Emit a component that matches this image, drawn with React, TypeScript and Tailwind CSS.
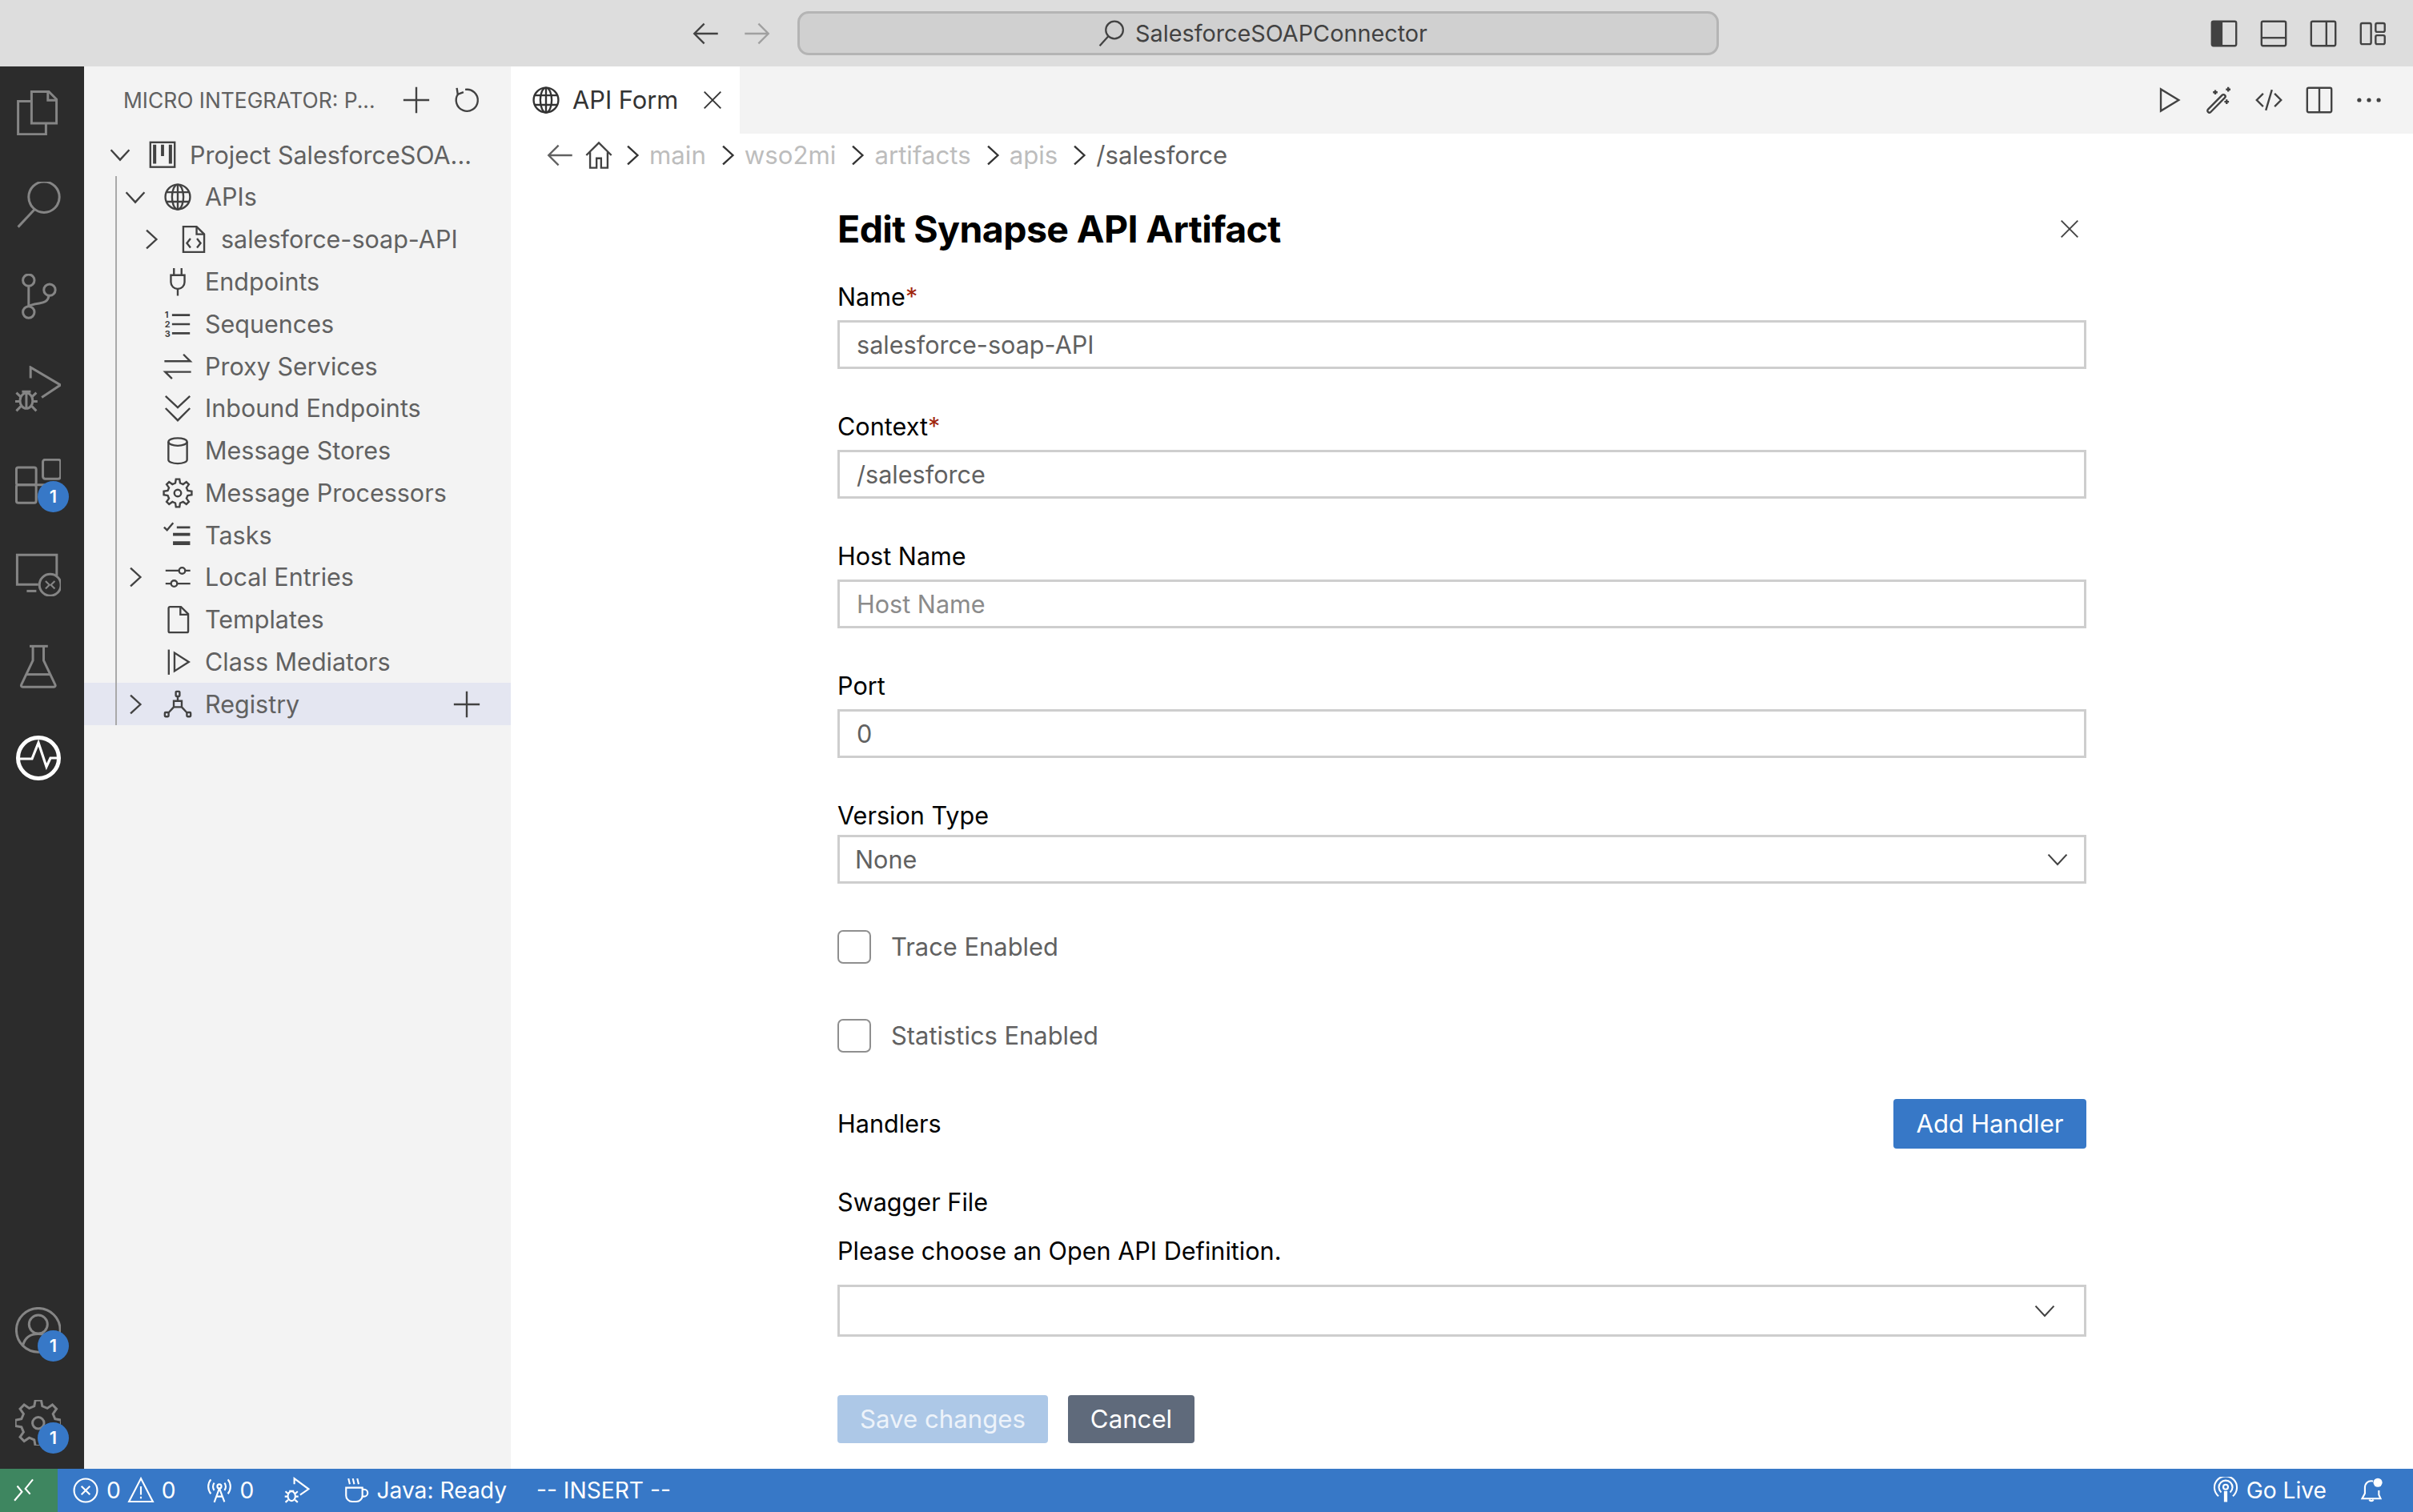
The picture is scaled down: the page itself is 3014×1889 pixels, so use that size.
import React from "react"

const font = "[font-family:Inter,'Liberation_Sans',sans-serif]"

// gear outline, codicon style
function gearPath(cx: number, cy: number, outer: number, inner: number, teeth: number) {
  const pts: string[] = []
  for (let i = 0; i < teeth; i++) {
    const a = (i / teeth) * Math.PI * 2
    const step = (Math.PI * 2) / teeth
    const at = (r: number, t: number) =>
      `${(cx + r * Math.sin(t)).toFixed(2)} ${(cy - r * Math.cos(t)).toFixed(2)}`
    pts.push(at(outer, a - step * 0.16), at(outer, a + step * 0.16), at(inner, a + step * 0.3), at(inner, a + step * 0.7))
  }
  return "M" + pts.join("L") + "Z"
}

function Ico({ children, className = "w-[38px] h-[38px]", sw = 1 }: { children: React.ReactNode; className?: string; sw?: number }) {
  return (
    <svg viewBox="0 0 16 16" fill="none" stroke="currentColor" strokeWidth={sw} className={`shrink-0 ${className}`}>
      {children}
    </svg>
  )
}

function BarIcon({ children, badge }: { children: React.ReactNode; badge?: boolean }) {
  return (
    <div className="relative w-[95px] h-[115.2px] flex items-center justify-center text-[#858585]">
      <svg viewBox="0 0 24 24" fill="none" stroke="currentColor" strokeWidth={1.25} className="w-[57.6px] h-[57.6px]">
        {children}
      </svg>
      {badge && (
        <span className="absolute left-[47px] top-[57px] w-[39px] h-[39px] rounded-full bg-[#3778c7] text-white text-[22px] font-semibold flex items-center justify-center">
          1
        </span>
      )}
    </div>
  )
}

function ActivityBar() {
  return (
    <div className="w-[105px] bg-[#2c2c2c] flex flex-col shrink-0">
      <BarIcon>
        <path d="M8.5 1h9l4 4v12.5h-13z" />
        <path d="M17 1v4.5h4.5" />
        <path d="M8.5 6H1.5v17.2h14.5v-5.7" />
      </BarIcon>
      <BarIcon>
        <circle cx="15" cy="8" r="8" />
        <path d="M10 14.5L1.5 23.6" />
      </BarIcon>
      <BarIcon>
        <circle cx="7" cy="3.4" r="3" />
        <circle cx="7" cy="20" r="3" />
        <circle cx="17.9" cy="8.4" r="3" />
        <path d="M7 6.4V17" />
        <path d="M17.5 11.4c-.3 3-2.5 3.6-5 4-2.6.4-5.2 1-5.5 1.6" />
      </BarIcon>
      <BarIcon>
        <path d="M8 6.5V.8L23.5 10 13.8 16.5" />
        <ellipse cx="5.8" cy="18.2" rx="3.3" ry="4" />
        <path d="M3.5 13.4h4.6M5.8 14.5V22M.6 14l2.4 2.3M11 14l-2.4 2.3M0 18.5h2.6M9 18.5h2.6M.6 23.5L3 21M11 23.5L8.6 21" />
      </BarIcon>
      <BarIcon badge>
        <rect x="0.6" y="4.6" width="10.3" height="9" rx="1" />
        <rect x="0.6" y="13.6" width="10.3" height="9.4" rx="1" />
        <path d="M10.9 13.6h5v5" />
        <rect x="14.4" y="0.5" width="9.2" height="10" rx="1.2" />
      </BarIcon>
      <BarIcon>
        <path d="M21.6 13V2.2H1v15.4h11" />
        <path d="M11 21H6" />
        <circle cx="18.2" cy="17.8" r="5.6" />
        <path d="M15.8 15.8l2 2-2 2M20.6 15.8l-2 2 2 2" strokeWidth={0.9} />
      </BarIcon>
      <BarIcon>
        <path d="M7.5 1.8h9.5" />
        <path d="M9.2 2v7.2L3.2 21.8c-.3.6 0 1.2.7 1.2h16.2c.7 0 1-.6.7-1.2L14.8 9.2V2" />
        <path d="M6 16.5h12" />
      </BarIcon>
      <div className="w-[95px] h-[115.2px] flex items-center justify-center text-white">
        <svg viewBox="0 0 60 60" fill="none" stroke="currentColor" className="w-[60px] h-[60px]">
          <circle cx="30" cy="30" r="25.5" strokeWidth={5} />
          <path d="M6 31h16l8-20 10 30 5-11h10" strokeWidth={3.2} />
        </svg>
      </div>
      <div className="mt-auto" />
      <BarIcon badge>
        <circle cx="12" cy="12" r="11.4" />
        <circle cx="12" cy="9" r="4.8" />
        <path d="M4 20c1-4 4-6 8-6s7 2 8 6" />
      </BarIcon>
      <BarIcon badge>
        <path d={gearPath(12, 12, 12, 9, 8)} />
        <circle cx="12" cy="12" r="3" />
      </BarIcon>
    </div>
  )
}

function Plus() {
  return (
    <Ico className="w-[38px] h-[38px]">
      <path d="M8 1.2v13.6M1.2 8h13.6" />
    </Ico>
  )
}

const ChevronRight = () => (
  <Ico>
    <path d="M5.5 3.2l5.2 4.8-5.2 4.8" />
  </Ico>
)
const ChevronDown = () => (
  <Ico>
    <path d="M3.2 5.6l4.8 5.2 4.8-5.2" />
  </Ico>
)

const Globe = ({ className }: { className?: string }) => (
  <Ico className={className}>
    <circle cx="8" cy="8" r="6.5" />
    <ellipse cx="8" cy="8" rx="3" ry="6.5" />
    <path d="M8 1.5v13M2 5.5h12M2 10.5h12" />
  </Ico>
)

const pads = ["pl-[26px]", "pl-[45px]", "pl-[65px]"]

function Row({
  level,
  arrow,
  icon,
  label,
  active,
  action,
}: {
  level: number
  arrow?: "right" | "down"
  icon: React.ReactNode
  label: string
  active?: boolean
  action?: React.ReactNode
}) {
  return (
    <div className={`h-[52.8px] flex items-center text-[#616161] ${pads[level]} ${active ? "bg-[#e4e6f1]" : ""}`}>
      <span className="w-[38px] shrink-0 text-[#424242]">
        {arrow === "right" && <ChevronRight />}
        {arrow === "down" && <ChevronDown />}
      </span>
      <span className="ml-[15px] w-[38px] shrink-0 text-[#424242]">{icon}</span>
      <span className="ml-[15px] whitespace-nowrap">{label}</span>
      {action && <span className="ml-auto pr-[36px] text-[#424242]">{action}</span>}
    </div>
  )
}

function Sidebar() {
  return (
    <div className="w-[533px] bg-[#f3f3f3] shrink-0 flex flex-col">
      <div className="h-[84px] flex items-center pl-[49px] pr-[37px] text-[26.4px] text-[#616161]">
        <span className="whitespace-nowrap pt-[2px]">MICRO INTEGRATOR: P...</span>
        <div className="ml-auto flex gap-[24px] text-[#424242]">
          <Plus />
          <Ico>
            <path d="M3.2 1.6l.5 3.400 3-1.200" />
            <path d="M3.9 4.800a5.700 5.700 0 1 0 3.700-2.300" />
          </Ico>
        </div>
      </div>
      <div className="relative text-[30.5px]">
        <div className="absolute left-[39px] top-[53px] bottom-0 w-[2px] bg-[#a9a9a9]" />
        <Row
          level={0}
          arrow="down"
          label="Project SalesforceSOA..."
          icon={
            <Ico>
              <rect x="1.6" y="1.6" width="12.8" height="13" />
              <path fill="currentColor" stroke="none" d="M3 2.8h1.7v10H3zM7.2 2.8h1.6v6H7.2zM11.3 2.8H13v10h-1.7z" />
            </Ico>
          }
        />
        <Row level={1} arrow="down" label="APIs" icon={<Globe />} />
        <Row
          level={2}
          arrow="right"
          label="salesforce-soap-API"
          icon={
            <Ico>
              <path d="M2.5 1.3h7l4 4v9.4h-11z" />
              <path d="M9.5 1.3v4h4" />
              <path d="M6.3 7.6L4.4 10l1.9 2.4M9.7 7.6l1.9 2.4-1.9 2.4" />
            </Ico>
          }
        />
        <Row
          level={1}
          label="Endpoints"
          icon={
            <Ico>
              <path d="M6 .8v3.7M10 .8v3.7M4.4 4.5h7.2v3.7a3.6 3.6 0 0 1-7.2 0zM8 11.8v3.6" />
            </Ico>
          }
        />
        <Row
          level={1}
          label="Sequences"
          icon={
            <Ico sw={1.1}>
              <path d="M5 3.2h9.4M5 8h9.4M5 12.8h9.4" />
              <text x="1.2" y="4.8" fontSize="4.6" fill="currentColor" stroke="none" fontWeight="700">1</text>
              <text x="1.2" y="9.8" fontSize="4.6" fill="currentColor" stroke="none" fontWeight="700">2</text>
              <text x="1.2" y="14.6" fontSize="4.6" fill="currentColor" stroke="none" fontWeight="700">3</text>
            </Ico>
          }
        />
        <Row
          level={1}
          label="Proxy Services"
          icon={
            <Ico>
              <path d="M1 5.6h13.6L11 2" />
              <path d="M15 11.2H1.4L5 14.8" />
            </Ico>
          }
        />
        <Row
          level={1}
          label="Inbound Endpoints"
          icon={
            <Ico>
              <path d="M1.6 1.6L8 7.6l6.4-6M1.6 8L8 14.4 14.4 8" />
            </Ico>
          }
        />
        <Row
          level={1}
          label="Message Stores"
          icon={
            <Ico>
              <ellipse cx="8" cy="3.4" rx="4.9" ry="2" />
              <path d="M3.1 3.4v9.4c0 1.1 2.2 2 4.9 2s4.9-.9 4.9-2V3.4" />
            </Ico>
          }
        />
        <Row
          level={1}
          label="Message Processors"
          icon={
            <Ico>
              <path d={gearPath(8, 8, 7.4, 5.4, 8)} />
              <circle cx="8" cy="8" r="1.8" />
            </Ico>
          }
        />
        <Row
          level={1}
          label="Tasks"
          icon={
            <Ico>
              <path d="M.8 3.6l1.6 1.6 3.2-3.8" />
              <path fill="currentColor" stroke="none" d="M7.5 3.2h7v1.1h-7zM5.5 6.6h9v1.6h-9zM5.5 11h9v2h-9z" />
            </Ico>
          }
        />
        <Row
          level={1}
          arrow="right"
          label="Local Entries"
          icon={
            <Ico>
              <path d="M1.6 4.6h7M12 4.6h2.6M1.6 11.4h2.800M7.800 11.4h6.800" />
              <circle cx="10.3" cy="4.6" r="1.6" />
              <circle cx="6.1" cy="11.4" r="1.6" />
            </Ico>
          }
        />
        <Row
          level={1}
          label="Templates"
          icon={
            <Ico>
              <path d="M3.2 2c0-.4.3-.7.7-.7h5.800l3.800 3.800v9c0 .4-.3.7-.7.7H3.900c-.4 0-.7-.3-.7-.7z" />
              <path d="M9.4 1.3v4.100h3.900" />
            </Ico>
          }
        />
        <Row
          level={1}
          label="Class Mediators"
          icon={
            <Ico>
              <path d="M3.3 1.5v13.2" />
              <path d="M6.3 3.2v9.600L13.800 8z" />
            </Ico>
          }
        />
        <Row
          level={1}
          arrow="right"
          active
          label="Registry"
          action={<Plus />}
          icon={
            <Ico>
              <rect x="7" y="1.2" width="2" height="2.6" rx=".4" />
              <path d="M8 3.800v2.400M5.900 6.200h4.200v3.200H5.900zM5.900 9.400l-2.800 3M10.100 9.400l2.800 3" />
              <rect x="1.2" y="12.2" width="2" height="2.2" rx=".4" />
              <rect x="12.8" y="12.2" width="2" height="2.2" rx=".4" />
            </Ico>
          }
        />
      </div>
    </div>
  )
}

function Field({ label, required, value, placeholder }: { label: string; required?: boolean; value?: string; placeholder?: string }) {
  return (
    <div className="mb-[52px]">
      <div className="h-[40px] mb-[9px] flex items-center text-black">
        {label}
        {required && <span className="text-[#a1260d]">*</span>}
      </div>
      <div
        className={`h-[61px] border-[3px] border-[#cecece] bg-white pl-[21px] flex items-center ${
          placeholder ? "text-[#8b8b8b]" : "text-[#616161]"
        }`}
      >
        {value ?? placeholder}
      </div>
    </div>
  )
}

function Check({ label, className }: { label: string; className: string }) {
  return (
    <div className={`flex items-center h-[42px] text-[#616161] ${className}`}>
      <span className="w-[42px] h-[42px] border-[2px] border-[#8f8f8f] rounded-[7px] bg-white" />
      <span className="ml-[25px] text-[30.9px]">{label}</span>
    </div>
  )
}

function Crumb({ children, className = "text-[#bdbdbd]" }: { children: React.ReactNode; className?: string }) {
  return (
    <>
      <span className="w-[48px] pl-[6px] flex justify-center text-[#333333]">
        <ChevronRight />
      </span>
      <span className={`whitespace-nowrap ${className}`}>{children}</span>
    </>
  )
}

function Editor() {
  return (
    <div className="flex-1 min-w-0 flex flex-col bg-white">
      <div className="h-[84px] bg-[#f3f3f3] flex items-stretch shrink-0">
        <div className="w-[286px] bg-white flex items-center pl-[25px] text-[#333333] text-[30.8px]">
          <Globe className="w-[38px] h-[38px]" />
          <span className="ml-[14px]">API Form</span>
          <Ico className="w-[30px] h-[30px] ml-[28px]">
            <path d="M2.5 2.5l11 11M13.5 2.5l-11 11" />
          </Ico>
        </div>
        <div className="ml-auto pr-[36px] flex items-center gap-[24.4px] text-[#424242]">
          <Ico>
            <path d="M3.8 2.3v11.4L13.2 8z" />
          </Ico>
          <Ico>
            <path d="M2.1 12.9l7.4-7.5c.4-.4 1-.4 1.4 0s.4 1 0 1.4l-7.4 7.5c-.4.4-1 .4-1.4 0s-.4-1 0-1.4z" />
            <path d="M4.7 3.9h2.4M5.9 2.7v2.4M12.7 1.2v2.4M11.5 2.4h2.4M10.7 8.900h2.400M11.900 7.700v2.400" />
          </Ico>
          <Ico>
            <path d="M5 4.6L1.6 8 5 11.4M11 4.6L14.4 8 11 11.4M9.6 2.6L6.4 13.4" />
          </Ico>
          <Ico>
            <rect x="1.6" y="1.6" width="12.8" height="12.8" rx=".8" />
            <path d="M8 1.6v12.8" />
          </Ico>
          <Ico>
            <g fill="currentColor" stroke="none">
              <circle cx="2.9" cy="8" r="1.1" />
              <circle cx="8" cy="8" r="1.1" />
              <circle cx="13.1" cy="8" r="1.1" />
            </g>
          </Ico>
        </div>
      </div>
      <div className="h-[54px] flex items-center pl-[43px] text-[#616161] text-[31.2px] shrink-0">
        <Ico>
          <path d="M14.2 8H2M7 2.8L1.8 8 7 13.2" />
        </Ico>
        <Ico className="w-[38px] h-[38px] ml-[10px] text-[#424242]">
          <path d="M1.4 8L8 1.4 14.6 8M3.4 6.4v8.200h3.400v-5h2.400v5h3.400V6.400" />
        </Ico>
        <span className="w-[38px] ml-[4px] -mr-[1px] text-[#333333]">
          <ChevronRight />
        </span>
        <span className="text-[#bdbdbd] ml-[3px]">main</span>
        <Crumb>wso2mi</Crumb>
        <Crumb>artifacts</Crumb>
        <Crumb>apis</Crumb>
        <Crumb className="text-[#616161]">/salesforce</Crumb>
      </div>
      <div className="ml-[408px] w-[1560px] text-[30.6px]">
        <div className="mt-[36px] h-[60px] mb-[34px] flex items-center justify-between">
          <h1 className="text-[46.5px] font-bold text-black tracking-[-0.6px]">Edit Synapse API Artifact</h1>
          <Ico className="w-[30px] h-[30px] mr-[6px] mb-[2px] text-[#424242]">
            <path d="M2.5 2.5l11 11M13.5 2.5l-11 11" />
          </Ico>
        </div>
        <Field label="Name" required value="salesforce-soap-API" />
        <Field label="Context" required value="/salesforce" />
        <Field label="Host Name" placeholder="Host Name" />
        <Field label="Port" value="0" />
        <div className="h-[40px] mb-[4px] flex items-center text-black">Version Type</div>
        <div className="h-[61px] border-[3px] border-[#cecece] pl-[19px] pr-[16px] flex items-center justify-between text-[#616161]">
          None
          <Ico className="w-[34px] h-[34px] text-[#424242]">
            <path d="M2.6 5l5.4 5.8L13.4 5" />
          </Ico>
        </div>
        <Check label="Trace Enabled" className="mt-[58px]" />
        <Check label="Statistics Enabled" className="mt-[69px]" />
        <div className="mt-[58px] h-[62px] flex items-center justify-between text-black">
          Handlers
          <button className="w-[241px] h-[62px] rounded-[4px] bg-[#3778c7] text-white text-[31.2px]">Add Handler</button>
        </div>
        <div className="mt-[47px] h-[40px] flex items-center text-black">Swagger File</div>
        <div className="mt-[21px] h-[40px] flex items-center text-black">Please choose an Open API Definition.</div>
        <div className="mt-[22px] h-[65px] border-[3px] border-[#cecece] pr-[32px] flex items-center justify-end">
          <Ico className="w-[34px] h-[34px] text-[#424242]">
            <path d="M2.6 5l5.4 5.8L13.4 5" />
          </Ico>
        </div>
        <div className="mt-[73px] flex gap-[25px] text-[31.2px]">
          <button className="w-[263px] h-[60px] rounded-[4px] bg-[#adc8e7] text-[#edf3fa]">Save changes</button>
          <button className="w-[158px] h-[60px] rounded-[4px] bg-[#5f6a7b] text-white">Cancel</button>
        </div>
      </div>
    </div>
  )
}

function StatusBar() {
  const icon = "w-[34px] h-[34px]"
  return (
    <div className="h-[54px] bg-[#3778c7] flex items-center text-white text-[28.2px] shrink-0">
      <div className="w-[72px] h-full bg-[#3e8660] flex items-center justify-center pr-[12px]">
        <Ico className={icon}>
          <path d="M2.4 14l4.4-5.2L4 5.4M13.2 1.6L8.8 7l2.8 3.2" />
        </Ico>
      </div>
      <Ico className={`${icon} ml-[18px]`}>
        <circle cx="8" cy="8" r="6.8" />
        <path d="M5.5 5.5l5 5M10.5 5.5l-5 5" />
      </Ico>
      <span className="ml-[9px]">0</span>
      <Ico className={`${icon} ml-[8px]`}>
        <path d="M8 1L1 14.6h14zM8 5.6v5M8 11.6v1.2" />
      </Ico>
      <span className="ml-[9px]">0</span>
      <Ico className={`${icon} ml-[37px]`}>
        <circle cx="8" cy="5.6" r="1.2" />
        <path d="M8 6.8L5 15M8 6.8l3 8M6.2 11.6h3.6M5 3.6c-1 1.2-1 3.2 0 4.4M11 3.6c1 1.2 1 3.2 0 4.4M3 1.6c-2 2.4-2 6 0 8.4M13 1.6c2 2.4 2 6 0 8.4" />
      </Ico>
      <span className="ml-[9px]">0</span>
      <Ico className={`${icon} ml-[37px]`}>
        <path d="M6.4 4.4V1L14.8 7.2l-5 3.4" />
        <ellipse cx="4.8" cy="11.4" rx="2.2" ry="2.8" />
        <path d="M3.4 8.4h2.8M1.2 8.6l1.6 1.4M8.4 8.6l-1.6 1.4M.8 11.6h1.8M7 11.6h1.8M1.2 15l1.6-1.4M8.4 15l-1.6-1.4" />
      </Ico>
      <Ico className={`${icon} ml-[40px]`}>
        <path d="M2 6.4h9.6V11a3.6 3.6 0 0 1-3.6 3.6H5.600A3.600 3.600 0 0 1 2 11z" />
        <path d="M11.6 7.4h1a2 2 0 0 1 0 4.2h-1.2" />
        <path d="M3.4 1l.8 3.4M6 1l.8 3.4M8.6 1l.8 3.4" />
      </Ico>
      <span className="ml-[8px]">Java: Ready</span>
      <span className="ml-[37px]">-- INSERT --</span>
      <div className="ml-auto flex items-center pr-[35px]">
        <Ico className={icon}>
          <circle cx="8" cy="6" r="1.4" />
          <path d="M8 8.4v6.4" strokeWidth={2} />
          <path d="M5.4 9.2a4 4 0 1 1 5.2 0M3.8 11.4a6.600 6.600 0 1 1 8.400 0" />
        </Ico>
        <span className="ml-[9px]">Go Live</span>
        <Ico className={`${icon} ml-[39px]`}>
          <path d="M9 2.6C5.800 2 4.200 4 4.200 6.600v3.200L2.600 12.800h10.800l-1-2.200V8" />
          <path d="M6.8 13.4a1.300 1.300 0 0 0 2.400 0" />
          <circle cx="11.8" cy="3.4" r="2.6" fill="currentColor" stroke="none" />
        </Ico>
      </div>
    </div>
  )
}

export default function App() {
  return (
    <div className={`w-[3014px] h-[1889px] flex flex-col overflow-hidden bg-white ${font}`}>
      <div className="h-[83px] bg-[#dddddd] flex items-center shrink-0 text-[#424242]">
        <div className="ml-[863px] flex items-center gap-[25px]">
          <Ico>
            <path d="M14.2 8H2M7 2.8L1.8 8 7 13.2" />
          </Ico>
          <Ico className="w-[38px] h-[38px] text-[#a0a0a0]">
            <path d="M1.8 8H14M9 2.8L14.2 8 9 13.2" />
          </Ico>
        </div>
        <div className="ml-[32px] w-[1151px] h-[55px] pl-[10px] rounded-[14px] border-[3px] border-[#b4b4b4] bg-[#d0d0d0] flex items-center justify-center text-[#424242] text-[28.8px]">
          <Ico className="w-[36px] h-[36px] text-[#424242]">
            <circle cx="9.8" cy="6" r="4.8" />
            <path d="M6.4 9.4L1.6 14.8" />
          </Ico>
          <span className="ml-[12px]">SalesforceSOAPConnector</span>
        </div>
        <div className="ml-auto pr-[31px] flex items-center gap-[24px]">
          <Ico>
            <rect x="1.6" y="1.6" width="12.8" height="12.8" rx=".8" />
            <path fill="currentColor" stroke="none" d="M1.6 1.6h5.6v12.8H1.6z" />
          </Ico>
          <Ico>
            <rect x="1.6" y="1.6" width="12.8" height="12.8" rx=".8" />
            <path d="M1.6 10.2h12.8" />
          </Ico>
          <Ico>
            <rect x="1.6" y="1.6" width="12.8" height="12.8" rx=".8" />
            <path d="M9.6 1.6v12.8" />
          </Ico>
          <Ico>
            <rect x="1.6" y="2.5" width="5.4" height="11" rx=".8" />
            <rect x="9.4" y="2.5" width="4.8" height="4.6" rx=".8" />
            <rect x="9.4" y="8.9" width="4.8" height="4.6" rx=".8" />
          </Ico>
        </div>
      </div>
      <div className="flex-1 flex min-h-0">
        <ActivityBar />
        <Sidebar />
        <Editor />
      </div>
      <StatusBar />
    </div>
  )
}
